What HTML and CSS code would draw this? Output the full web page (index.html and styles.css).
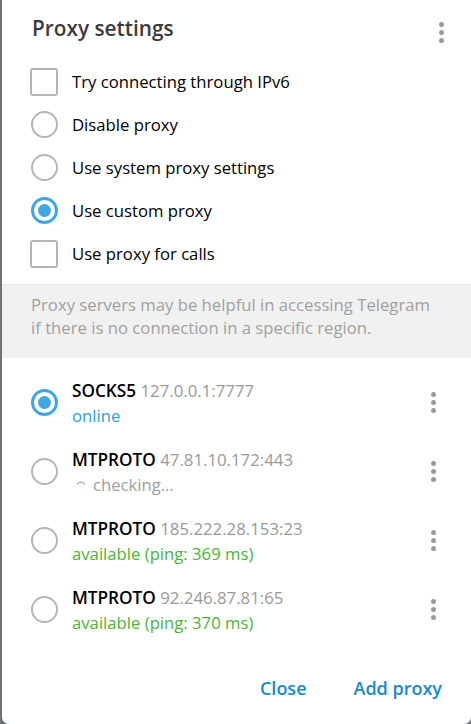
FILE: index.html
```html
<!DOCTYPE html>
<html>
<head>
<meta charset="utf-8">
<link rel="stylesheet" href="styles.css">
</head>
<body>
<div class="dialog">
  <div class="header">
    <div class="title">Proxy settings</div>
    <div class="kebab"><span></span><span></span><span></span></div>
  </div>
  <div class="options">
    <div class="opt"><span class="check"></span><span class="label">Try connecting through IPv6</span></div>
    <div class="opt"><span class="radio"></span><span class="label">Disable proxy</span></div>
    <div class="opt"><span class="radio"></span><span class="label">Use system proxy settings</span></div>
    <div class="opt"><span class="radio on"></span><span class="label">Use custom proxy</span></div>
    <div class="opt"><span class="check"></span><span class="label">Use proxy for calls</span></div>
  </div>
  <div class="about">Proxy servers may be helpful in accessing Telegram<br>if there is no connection in a specific region.</div>
  <div class="proxies">
    <div class="proxy">
      <span class="radio on"></span>
      <div class="info">
        <div class="name"><b>SOCKS5</b> <span class="addr">127.0.0.1:7777</span></div>
        <div class="status online">online</div>
      </div>
      <div class="kebab small"><span></span><span></span><span></span></div>
    </div>
    <div class="proxy">
      <span class="radio"></span>
      <div class="info">
        <div class="name"><b>MTPROTO</b> <span class="addr">47.81.10.172:443</span></div>
        <div class="status checking"><svg class="spin" width="12" height="12" viewBox="0 0 12 12"><path d="M2 7.5 A4.5 4.5 0 0 1 10 7.5" fill="none" stroke="#aaa" stroke-width="1.2"/></svg>checking…</div>
      </div>
      <div class="kebab small"><span></span><span></span><span></span></div>
    </div>
    <div class="proxy">
      <span class="radio"></span>
      <div class="info">
        <div class="name"><b>MTPROTO</b> <span class="addr">185.222.28.153:23</span></div>
        <div class="status avail">available (ping: 369 ms)</div>
      </div>
      <div class="kebab small"><span></span><span></span><span></span></div>
    </div>
    <div class="proxy">
      <span class="radio"></span>
      <div class="info">
        <div class="name"><b>MTPROTO</b> <span class="addr">92.246.87.81:65</span></div>
        <div class="status avail">available (ping: 370 ms)</div>
      </div>
      <div class="kebab small"><span></span><span></span><span></span></div>
    </div>
  </div>
  <div class="buttons">
    <span class="btn">Close</span>
    <span class="btn">Add proxy</span>
  </div>
</div>
</body>
</html>
```
FILE: styles.css
```css
html, body {
  margin: 0;
  padding: 0;
  height: 724px;
  overflow: hidden;
}
body {
  background: #6e7377;
  font-family: "Open Sans", sans-serif;
}
.dialog {
  margin-left: 2px;
  width: 469px;
  height: 724px;
  background: #fff;
  border-radius: 0 0 7px 7px;
  display: flex;
  flex-direction: column;
}
.header {
  height: 60px;
  display: flex;
  align-items: flex-start;
  justify-content: space-between;
  padding: 0 27px 0 30px;
  box-sizing: border-box;
}
.title {
  font-size: 20.8px;
  font-weight: 600;
  color: #3b3b3b;
  margin-top: 12px;
  line-height: 32px;
}
.kebab {
  display: flex;
  flex-direction: column;
  gap: 3px;
  margin-top: 22px;
}
.kebab span {
  width: 5px;
  height: 5px;
  border-radius: 50%;
  background: #999;
}
.kebab.small {
  margin-top: 0;
  align-self: center;
  margin-right: 5px;
}
.options {
  display: flex;
  flex-direction: column;
  padding-left: 27px;
}
.opt {
  height: 43px;
  display: flex;
  align-items: center;
}
.check {
  width: 28px;
  height: 28px;
  box-sizing: border-box;
  border: 2px solid #b5b5b5;
  border-radius: 3px;
  margin-right: 14px;
  margin-left: 1px;
}
.radio {
  width: 27px;
  height: 27px;
  box-sizing: border-box;
  border: 2px solid #b5b5b5;
  border-radius: 50%;
  margin-right: 14px;
  margin-left: 2px;
  flex: none;
  position: relative;
}
.radio.on {
  border: 3px solid #40a7e3;
}
.radio.on::after {
  content: "";
  position: absolute;
  left: 50%;
  top: 50%;
  width: 13px;
  height: 13px;
  margin: -6.5px 0 0 -6.5px;
  border-radius: 50%;
  background: #40a7e3;
}
.label {
  font-size: 16.7px;
  color: #000;
}
.about {
  margin-top: 9px;
  background: #f1f1f1;
  box-shadow: inset 0 1px 1px rgba(0,0,0,0.04);
  height: 74px;
  box-sizing: border-box;
  padding: 9px 0 0 29px;
  font-size: 16.7px;
  line-height: 23px;
  color: #a0a0a0;
}
.proxies {
  margin-top: 10px;
  display: flex;
  flex-direction: column;
}
.proxy {
  height: 69px;
  display: flex;
  align-items: center;
  padding-left: 27px;
  padding-right: 30px;
}
.info {
  flex: 1;
  display: flex;
  flex-direction: column;
  padding-top: 0;
}
.name {
  font-size: 16.8px;
  line-height: 25px;
  color: #000;
}
.name b {
  font-weight: 600;
  font-size: 17.2px;
}
.addr {
  color: #999;
  font-weight: 400;
}
.status {
  font-size: 16.7px;
  line-height: 25px;
}
.online { color: #2f9ede; }
.checking { color: #a0a0a0; display: flex; align-items: center; }
.spin { margin-right: 6px; margin-top: -2px; margin-left: 3px; }
.avail { color: #4bb33a; }
.buttons {
  margin-top: auto;
  height: 67px;
  display: flex;
  justify-content: flex-end;
  align-items: flex-start;
  gap: 47px;
  padding-right: 29px;
}
.btn {
  font-size: 18px;
  font-weight: 600;
  color: #168acd;
  line-height: 24px;
  margin-top: 19px;
}
```
